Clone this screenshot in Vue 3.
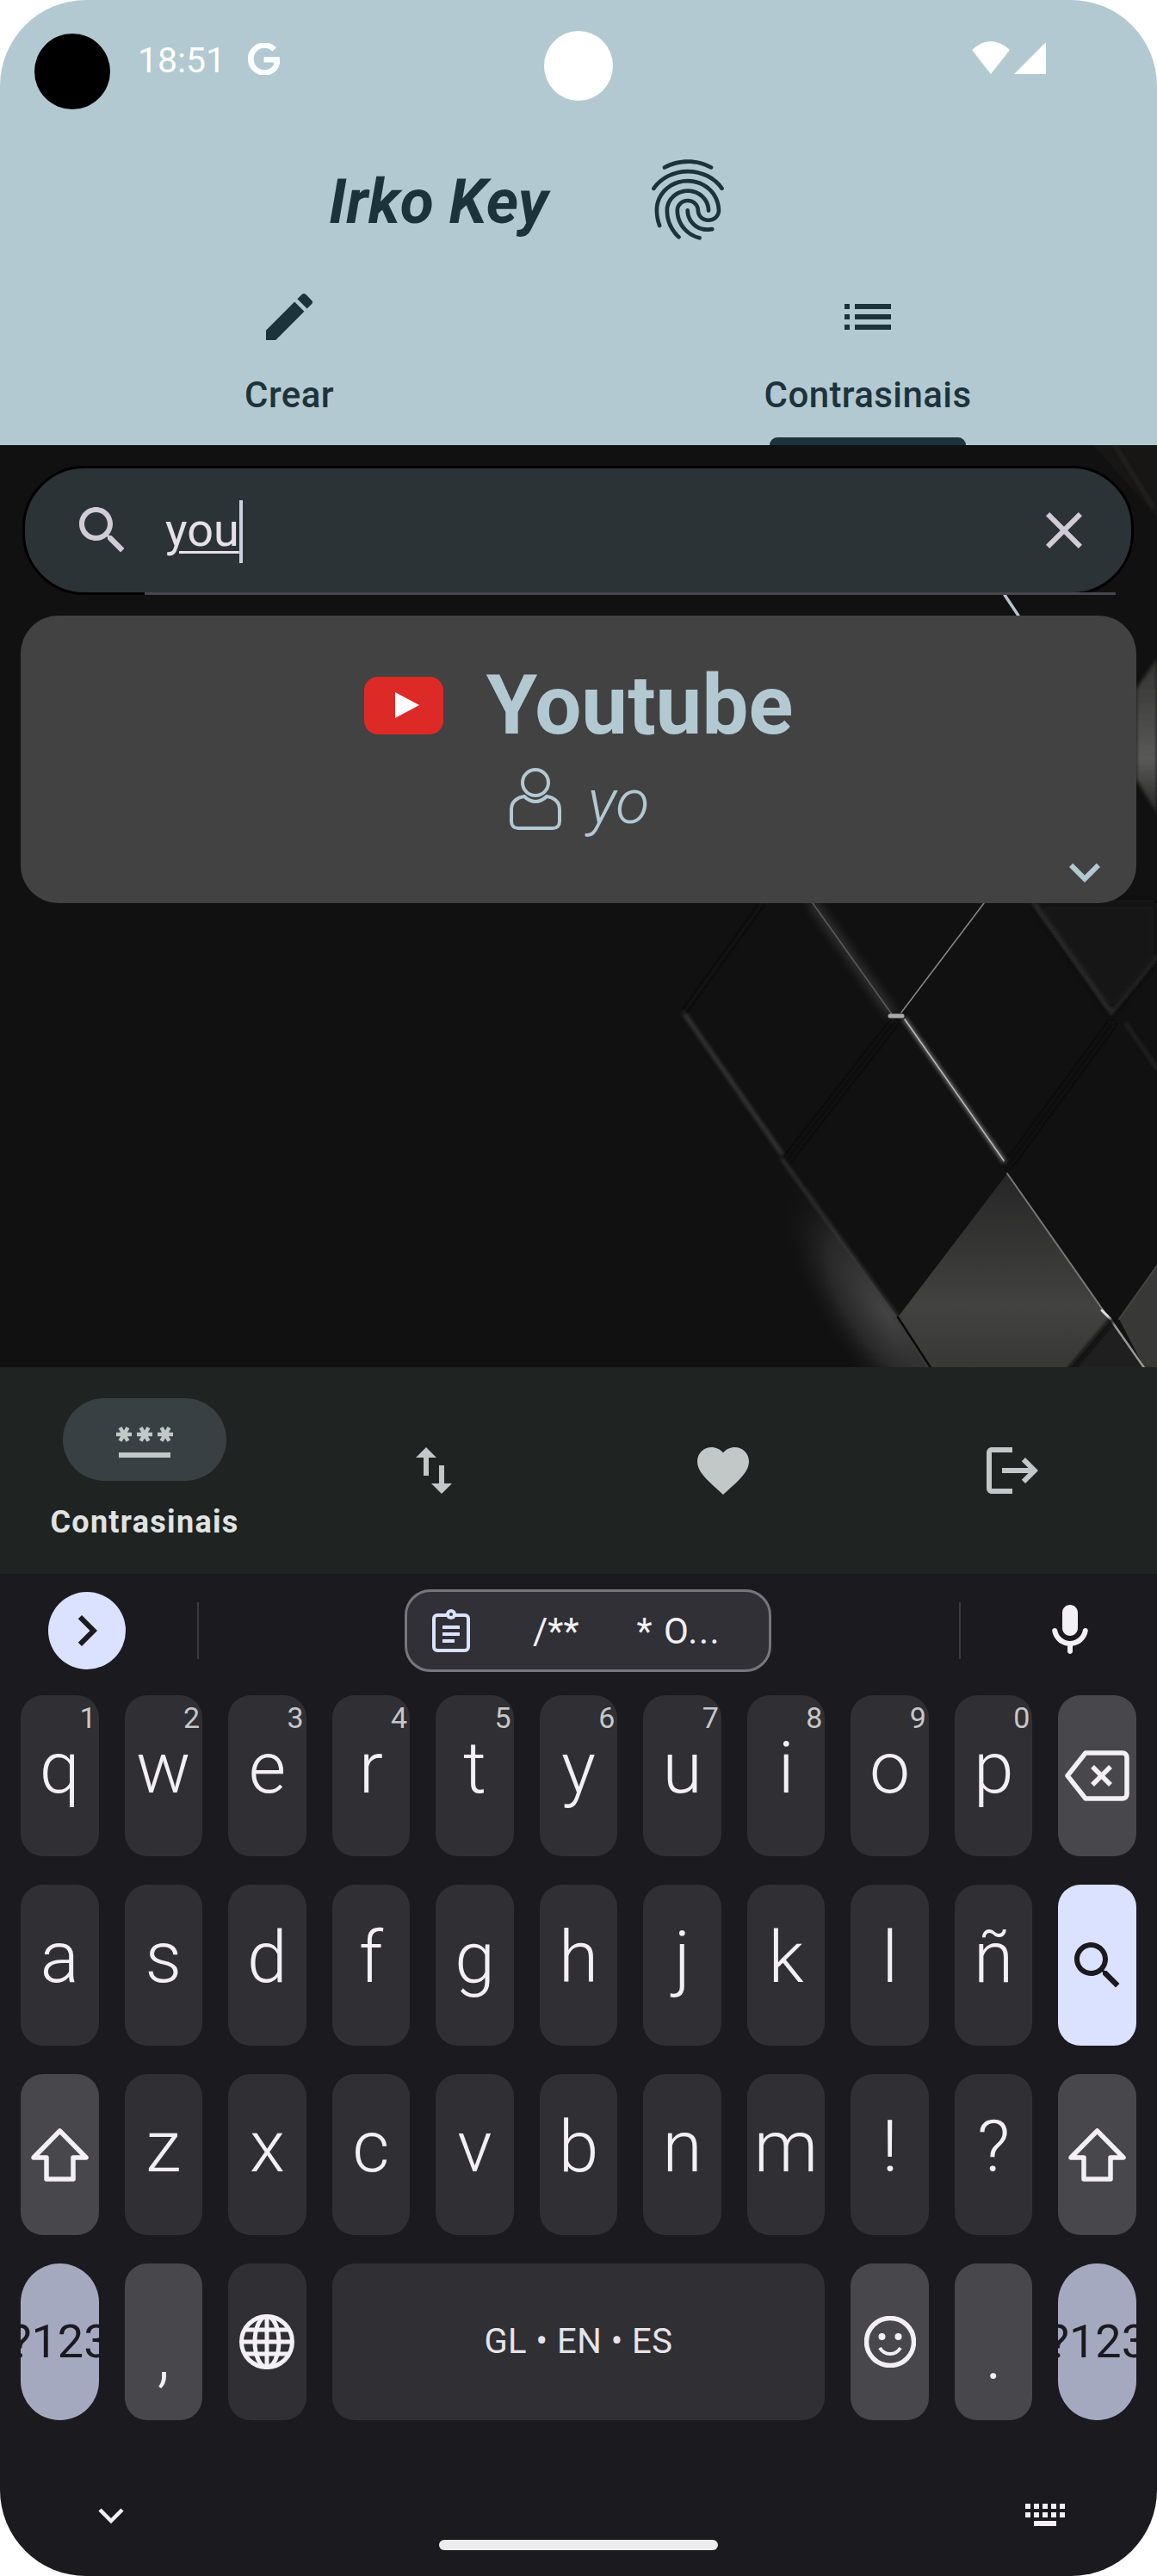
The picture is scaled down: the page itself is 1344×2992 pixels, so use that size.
<template>
  <div class="phone">
    <header class="top">
      <div class="status">
        <span class="cam"></span>
        <span class="time">18:51</span>
        <svg class="g-icon" viewBox="0 0 24 24"><path d="M12.48 10.92v3.28h7.84c-.24 1.84-.853 3.187-1.787 4.133-1.147 1.147-2.933 2.4-6.053 2.4-4.827 0-8.6-3.893-8.6-8.72s3.773-8.72 8.6-8.72c2.6 0 4.507 1.027 5.907 2.347l2.307-2.307C18.747 1.44 16.133 0 12.48 0 5.867 0 .307 5.387.307 12s5.56 12 12.173 12c3.573 0 6.267-1.173 8.373-3.36 2.16-2.16 2.84-5.213 2.84-7.667 0-.76-.053-1.467-.173-2.053H12.48z"/></svg>
        <svg class="sys-icons" viewBox="0 0 86 38"><path d="M0 10Q22-10 44 10L22 38Z"/><path d="M86 1V38H49Z"/></svg>
        <span class="dot"></span>
      </div>
      <div class="brand">
        <h1>Irko Key</h1>
        <svg class="finger" viewBox="0 0 24 24"><path d="M17.81 4.47c-.08 0-.16-.02-.23-.06C15.66 3.42 14 3 12.01 3c-1.98 0-3.86.47-5.57 1.41-.24.13-.54.04-.68-.2-.13-.24-.04-.55.2-.68C7.82 2.52 9.86 2 12.01 2c2.13 0 3.99.47 6.03 1.52.25.13.34.43.21.67-.09.18-.26.28-.44.28zM3.5 9.72c-.1 0-.2-.03-.29-.09-.23-.16-.28-.47-.12-.7.99-1.4 2.25-2.5 3.75-3.27C9.98 4.04 14 4.03 17.15 5.65c1.5.77 2.76 1.86 3.75 3.25.16.22.11.54-.12.7-.23.16-.54.11-.7-.12-.9-1.26-2.04-2.25-3.39-2.94-2.87-1.47-6.54-1.47-9.4.01-1.36.7-2.5 1.7-3.4 2.96-.08.14-.23.21-.39.21zm6.25 12.07c-.13 0-.26-.05-.35-.15-.87-.87-1.34-1.43-2.01-2.64-.69-1.23-1.05-2.73-1.05-4.34 0-2.97 2.54-5.39 5.66-5.39s5.66 2.42 5.66 5.39c0 .28-.22.5-.5.5s-.5-.22-.5-.5c0-2.42-2.09-4.39-4.66-4.39-2.57 0-4.66 1.97-4.66 4.39 0 1.44.32 2.77.93 3.85.64 1.15 1.08 1.64 1.85 2.42.19.2.19.51 0 .71-.11.1-.24.15-.37.15zm7.17-1.85c-1.19 0-2.24-.3-3.1-.89-1.49-1.01-2.38-2.65-2.38-4.39 0-.28.22-.5.5-.5s.5.22.5.5c0 1.41.72 2.74 1.94 3.56.71.48 1.54.71 2.54.71.24 0 .64-.03 1.04-.1.27-.05.53.13.58.41.05.27-.13.53-.41.58-.57.11-1.07.12-1.21.12zM14.91 22c-.04 0-.09-.01-.13-.02-1.59-.44-2.63-1.03-3.72-2.1-1.4-1.39-2.17-3.24-2.17-5.22 0-1.62 1.38-2.94 3.08-2.94 1.7 0 3.08 1.32 3.08 2.94 0 1.07.93 1.94 2.08 1.94s2.08-.87 2.08-1.94c0-3.77-3.25-6.83-7.25-6.83-2.84 0-5.44 1.58-6.61 4.03-.39.81-.59 1.76-.59 2.8 0 .78.07 2.01.67 3.61.1.26-.03.55-.29.64-.26.1-.55-.04-.64-.29-.49-1.31-.73-2.61-.73-3.96 0-1.2.23-2.29.68-3.24 1.33-2.79 4.28-4.6 7.51-4.6 4.55 0 8.25 3.51 8.25 7.83 0 1.62-1.38 2.94-3.08 2.94s-3.08-1.32-3.08-2.94c0-1.07-.93-1.94-2.08-1.94s-2.08.87-2.08 1.94c0 1.71.66 3.31 1.87 4.51.95.94 1.86 1.46 3.27 1.85.27.07.42.35.35.61-.05.23-.26.38-.47.38z"/></svg>
      </div>
      <div class="tabs">
        <div class="tab">
          <svg class="ico" viewBox="0 0 24 24"><path d="M3 17.25V21h3.75L17.81 9.94l-3.75-3.75L3 17.25zM20.71 7.04c.39-.39.39-1.02 0-1.41l-2.34-2.34c-.39-.39-1.02-.39-1.41 0l-1.83 1.83 3.75 3.75 1.83-1.83z"/></svg>
          <span>Crear</span>
        </div>
        <div class="tab">
          <svg class="ico" viewBox="0 0 24 24"><path d="M3 13h2v-2H3v2zm0 4h2v-2H3v2zm0-8h2V7H3v2zm4 4h14v-2H7v2zm0 4h14v-2H7v2zM7 7v2h14V7H7z"/></svg>
          <span>Contrasinais</span>
          <i class="indicator"></i>
        </div>
      </div>
    </header>

    <main class="content">
      <svg class="wall" viewBox="0 517 1344 1071" preserveAspectRatio="none">
        <defs>
          <filter id="b2" x="-30%" y="-30%" width="160%" height="160%"><feGaussianBlur stdDeviation="2"/></filter>
          <filter id="b6" x="-30%" y="-30%" width="160%" height="160%"><feGaussianBlur stdDeviation="6"/></filter>
          <linearGradient id="litD" x1="0" y1="0" x2="0" y2="1">
            <stop offset="0" stop-color="#262626"/><stop offset=".65" stop-color="#424241"/><stop offset="1" stop-color="#363635"/>
          </linearGradient>
          <radialGradient id="glowL" gradientUnits="userSpaceOnUse" cx="0" cy="0" r="1">
            <stop offset="0" stop-color="#444"/><stop offset=".55" stop-color="#282828"/><stop offset="1" stop-color="#111" stop-opacity="0"/>
          </radialGradient>
          <linearGradient id="edgeR" x1="0" y1="0" x2="0" y2="1">
            <stop offset="0" stop-color="#333331"/><stop offset=".65" stop-color="#595957"/><stop offset="1" stop-color="#262626"/>
          </linearGradient>
        </defs>
        <rect x="0" y="517" width="1344" height="1071" fill="#111"/>
        <path d="M1201 1049H1344V1111L1291 1176Z" fill="#181818" filter="url(#b6)"/>
        <!-- soft light falling to the left of the big tile -->
        <g transform="translate(1030 1525) rotate(54) scale(190 72)">
          <circle r="1" fill="url(#glowL)"/>
        </g>
        <path d="M908 1346L1041 1184L1170 1362L1043 1530Z" fill="#111"/>
        <path d="M1170 1363L1283 1524L1330 1600H1082L1043 1530Z" fill="url(#litD)"/>
        <path d="M1300 1532L1344 1470V1600H1335Z" fill="#383837"/>
        <path d="M1291 1534L1242 1592H1332Z" fill="#1f1f1f"/>
        <path d="M1320 800L1344 765V945L1320 905Z" fill="url(#edgeR)" filter="url(#b2)"/>
        <path d="M1270 517L1344 600V517Z" fill="#171615"/>
        <g fill="none" stroke-linecap="round">
          <path d="M912 1350L1038 1188M1172 1352L1291 1190" stroke="#090909" stroke-width="9" filter="url(#b2)"/>
          <path d="M794 1176L908 1340" stroke="#3c3c3c" stroke-width="4" filter="url(#b2)"/>
          <path d="M794 1176L885 1050" stroke="#0b0b0b" stroke-width="4" filter="url(#b2)"/>
          <path d="M908 1346L1043 1530" stroke="#3a3a3a" stroke-width="3" filter="url(#b2)"/>
          <path d="M944 1049L1036 1178" stroke="#4a4a4a" stroke-width="6" filter="url(#b6)"/>
          <path d="M944 1049L1036 1178" stroke="#5c5c5c" stroke-width="1.5"/>
          <path d="M1143 1049L1047 1176" stroke="#888" stroke-width="1.5"/>
          <path d="M1051 1184L1166 1348" stroke="#666" stroke-width="5" filter="url(#b2)"/>
          <path d="M1051 1184L1166 1348" stroke="#bbb" stroke-width="1.5"/>
          <path d="M1034 1180H1048" stroke="#aaa" stroke-width="5"/>
          <path d="M1201 1049L1291 1176" stroke="#333" stroke-width="4" filter="url(#b2)"/>
          <path d="M1344 1111L1291 1176M1308 1189L1344 1241" stroke="#2c2c2c" stroke-width="3" filter="url(#b2)"/>
          <path d="M1170 1363L1283 1524" stroke="#777" stroke-width="2"/>
          <path d="M1291 1534L1330 1590" stroke="#999" stroke-width="2.5"/>
          <path d="M1280 1522L1290 1532" stroke="#ddd" stroke-width="3"/>
          <path d="M1043 1530L1082 1590" stroke="#0a0a0a" stroke-width="2.5"/>
          <path d="M1291 1534L1242 1592" stroke="#0c0c0c" stroke-width="6" filter="url(#b2)"/>
          <path d="M1300 1532L1344 1470" stroke="#444" stroke-width="2"/>
          <path d="M1167 691L1183 715" stroke="#b8c2d0" stroke-width="3.5"/>
          <path d="M1295 517L1340 590" stroke="#2a2724" stroke-width="3" filter="url(#b2)"/>
        </g>
      </svg>

      <div class="search">
        <svg class="ico-s" viewBox="0 0 24 24"><path d="M15.5 14h-.79l-.28-.27C15.41 12.59 16 11.11 16 9.5 16 5.91 13.09 3 9.5 3S3 5.91 3 9.5 5.91 16 9.5 16c1.61 0 3.09-.59 4.23-1.57l.27.28v.79l5 4.99L20.49 19l-4.99-5zm-6 0C7.01 14 5 11.99 5 9.5S7.01 5 9.5 5 14 7.01 14 9.5 11.99 14 9.5 14z"/></svg>
        <span class="query">you</span><i class="caret"></i>
        <svg class="ico-s close" viewBox="0 0 24 24"><path d="M19 6.41L17.59 5 12 10.59 6.41 5 5 6.41 10.59 12 5 17.59 6.41 19 12 13.41 17.59 19 19 17.59 13.41 12z"/></svg>
        <i class="search-line"></i>
      </div>

      <section class="card">
        <div class="card-title">
          <svg class="yt" viewBox="0 0 92 67"><rect width="92" height="67" rx="16" fill="#de2a27"/><path d="M36 18L64 33L36 48Z" fill="#fff"/></svg>
          <span>Youtube</span>
        </div>
        <div class="card-user">
          <svg class="user" viewBox="0 0 60 72" fill="none"><circle cx="30" cy="17" r="15"/><path d="M17 33c-8 1-15 6-15 15v14c0 5 3 8 8 8h40c5 0 8-3 8-8V48c0-9-7-14-15-15-3 3-7 6-13 6s-10-3-13-6z"/></svg>
          <span>yo</span>
        </div>
        <svg class="expand" viewBox="0 0 24 24"><path d="M7.41 8.59L12 13.17l4.59-4.58L18 10l-6 6-6-6z"/></svg>
      </section>
    </main>

    <nav class="bottom-nav">
      <div class="nav-item active">
        <div class="pill">
          <svg class="ico" viewBox="0 0 24 24"><path d="M2 17h20v2H2v-2zm1.15-4.05L4 11.47l.85 1.48 1.3-.75-.85-1.48H7v-1.5H5.3l.85-1.47L4.85 7 4 8.47 3.15 7l-1.3.75.85 1.47H1v1.5h1.7l-.85 1.48 1.3.75zm6.7-.75 1.3.75.85-1.48.85 1.48 1.3-.75-.85-1.48H15v-1.5h-1.7l.85-1.47-1.3-.75L12 8.47 11.15 7l-1.3.75.85 1.47H9v1.5h1.7l-.85 1.48zM23 9.22h-1.7l.85-1.47-1.3-.75L20 8.47 19.15 7l-1.3.75.85 1.47H17v1.5h1.7l-.85 1.48 1.3.75.85-1.48.85 1.48 1.3-.75-.85-1.48H23v-1.5z"/></svg>
        </div>
        <span>Contrasinais</span>
      </div>
      <div class="nav-item">
        <svg class="ico" viewBox="0 0 24 24"><path d="M16 17.01V10h-2v7.01h-3L15 21l4-3.99h-3zM9 3L5 6.99h3V14h2V6.99h3L9 3z"/></svg>
      </div>
      <div class="nav-item">
        <svg class="ico" viewBox="0 0 24 24"><path d="M12 21.35l-1.45-1.32C5.4 15.36 2 12.28 2 8.5 2 5.42 4.42 3 7.5 3c1.74 0 3.41.81 4.5 2.09C13.09 3.81 14.76 3 16.5 3 19.58 3 22 5.42 22 8.5c0 3.78-3.4 6.86-8.55 11.54L12 21.35z"/></svg>
      </div>
      <div class="nav-item">
        <svg class="ico" viewBox="0 0 24 24"><path d="M17 7l-1.41 1.41L18.17 11H8v2h10.17l-2.58 2.58L17 17l5-5zM4 5h8V3H4c-1.1 0-2 .9-2 2v14c0 1.1.9 2 2 2h8v-2H4V5z"/></svg>
      </div>
    </nav>

    <section class="keyboard">
      <div class="toolbar">
        <div class="round-btn">
          <svg viewBox="0 0 24 24" width="72" height="72"><path d="M8.59 16.59L13.17 12 8.59 7.41 10 6l6 6-6 6z"/></svg>
        </div>
        <i class="divider first"></i>
        <div class="clip">
          <svg class="clip-ico" viewBox="0 0 44 50" fill="none">
            <rect x="2" y="7" width="40" height="41" rx="4" stroke-width="4"/>
            <circle cx="22" cy="6" r="6" fill="#dae2ff" stroke="none"/>
            <circle cx="22" cy="6" r="2" fill="#303036" stroke="none"/>
            <path d="M12 21H32M12 29H32M12 37H26" stroke-width="4"/>
          </svg>
          <span class="clip-a">/**</span>
          <span class="clip-b">* O...</span>
        </div>
        <i class="divider"></i>
        <svg class="mic" viewBox="0 0 24 24"><path d="M12 14c1.66 0 3-1.34 3-3V5c0-1.66-1.34-3-3-3S9 3.34 9 5v6c0 1.66 1.34 3 3 3zm5.91-3c-.49 0-.9.36-.98.85C16.52 14.2 14.47 16 12 16s-4.52-1.8-4.93-4.15c-.08-.49-.49-.85-.98-.85-.61 0-1.09.54-1 1.14.49 3 2.89 5.35 5.91 5.78V20c0 .55.45 1 1 1s1-.45 1-1v-2.08c3.02-.43 5.42-2.78 5.91-5.78.1-.6-.39-1.14-1-1.14z"/></svg>
      </div>

      <div class="keys">
        <div v-for="k in keys" :key="k.id" class="key" :class="k.cls">
          <template v-if="k.icon === 'back'">
            <svg width="75" height="59" viewBox="0 0 75 59" fill="none" class="line-ico"><path d="M24 3H67a5 5 0 0 1 5 5V51a5 5 0 0 1-5 5H24L3 29.5Z"/><path d="M32 19L53 40M53 19L32 40"/></svg>
          </template>
          <template v-else-if="k.icon === 'search'">
            <svg width="72" height="72" viewBox="0 0 24 24"><path d="M15.5 14h-.79l-.28-.27C15.41 12.59 16 11.11 16 9.5 16 5.91 13.09 3 9.5 3S3 5.91 3 9.5 5.91 16 9.5 16c1.61 0 3.09-.59 4.23-1.57l.27.28v.79l5 4.99L20.49 19l-4.99-5zm-6 0C7.01 14 5 11.99 5 9.5S7.01 5 9.5 5 14 7.01 14 9.5 11.99 14 9.5 14z" fill="#1a1a1f"/></svg>
          </template>
          <template v-else-if="k.icon === 'shift'">
            <svg width="69" height="63" viewBox="0 0 69 63" fill="none" class="line-ico"><path d="M34.5 4L65 35H50V60H19V35H4Z"/></svg>
          </template>
          <template v-else-if="k.icon === 'globe'">
            <svg width="64" height="64" viewBox="0 0 64 64" fill="none" class="line-ico thin"><circle cx="32" cy="32" r="29.5"/><ellipse cx="32" cy="32" rx="14" ry="29.5"/><path d="M32 3V61M3 32H61M7 18H57M7 46H57"/></svg>
          </template>
          <template v-else-if="k.icon === 'emoji'">
            <svg width="60" height="60" viewBox="0 0 60 60" fill="none" class="line-ico"><circle cx="30" cy="30" r="27.5"/><circle cx="20.5" cy="24" r="4" fill="#f2f0f5" stroke="none"/><circle cx="39.5" cy="24" r="4" fill="#f2f0f5" stroke="none"/><path d="M18 37c3 5 7 7 12 7s9-2 12-7" stroke-width="4"/></svg>
          </template>
          <template v-else>{{ k.label }}</template>
          <span v-if="k.hint" class="hint">{{ k.hint }}</span>
        </div>
      </div>

      <div class="kb-foot">
        <div class="kb-foot-row">
          <svg width="30" height="18" viewBox="0 0 30 18" fill="none"><path d="M2 2L15 15L28 2" stroke="#f2f0f5" stroke-width="4.5"/></svg>
          <svg width="47" height="27" viewBox="0 0 47 27" fill="#f2f0f5">
            <rect v-for="n in 5" :key="'a' + n" :x="(n - 1) * 10" y="0" width="6" height="6"/>
            <rect v-for="n in 5" :key="'b' + n" :x="(n - 1) * 10" y="10" width="6" height="6"/>
            <rect x="10" y="20" width="26" height="6"/>
          </svg>
        </div>
        <i class="home"></i>
      </div>
    </section>
  </div>
</template>

<script setup>
const row1 = ['q', 'w', 'e', 'r', 't', 'y', 'u', 'i', 'o', 'p']
const hints = ['1', '2', '3', '4', '5', '6', '7', '8', '9', '0']
const row2 = ['a', 's', 'd', 'f', 'g', 'h', 'j', 'k', 'l', 'ñ']
const row3 = ['z', 'x', 'c', 'v', 'b', 'n', 'm', '!', '?']

const keys = [
  ...row1.map((l, i) => ({ id: l, label: l, hint: hints[i] })),
  { id: 'back', icon: 'back', cls: 'fn' },
  ...row2.map((l) => ({ id: l, label: l })),
  { id: 'search', icon: 'search', cls: 'action' },
  { id: 'shift1', icon: 'shift', cls: 'fn' },
  ...row3.map((l) => ({ id: l, label: l })),
  { id: 'shift2', icon: 'shift', cls: 'fn' },
  { id: 'sym1', label: '?123', cls: 'sym' },
  { id: 'comma', label: ',', cls: 'fn low' },
  { id: 'globe', icon: 'globe' },
  { id: 'space', label: 'GL • EN • ES', cls: 'space' },
  { id: 'emoji', icon: 'emoji', cls: 'fn' },
  { id: 'dot', label: '.', cls: 'fn low' },
  { id: 'sym2', label: '?123', cls: 'sym' }
]
</script>

<style>
html, body { margin: 0; background: #fff; }
</style>

<style scoped>
.phone { width: 1344px; height: 2992px; border-radius: 100px; overflow: hidden; display: flex; flex-direction: column; font-family: Roboto, "Noto Sans", sans-serif; position: relative; }
.top { height: 517px; flex: none; background: #b3c9d2; color: #1d333b; }
.status { height: 166px; display: flex; align-items: flex-start; padding: 0 129px 0 40px; box-sizing: border-box; position: relative; }
.cam { width: 88px; height: 88px; margin-top: 39px; border-radius: 50%; background: #000; }
.time { margin: 47px 0 0 32px; font-size: 41px; line-height: 47px; color: #fff; }
.g-icon { width: 37px; height: 37px; margin: 50px 0 0 26px; fill: #fff; stroke: #fff; stroke-width: .9; }
.sys-icons { width: 86px; height: 38px; margin: 48px 0 0 auto; fill: #fff; }
.dot { position: absolute; left: 632px; top: 36px; width: 80px; height: 81px; border-radius: 50%; background: #fff; }
.brand { height: 166px; display: flex; align-items: flex-start; padding-left: 382px; }
.brand h1 { margin: 26px 0 0; font-size: 71.5px; line-height: 86px; font-weight: 700; font-style: italic; }
.finger { width: 112px; height: 112px; margin: 10px 0 0 106px; fill: #1d333b; }
.tabs { display: grid; grid-template-columns: 1fr 1fr; height: 185px; }
.tab { position: relative; display: flex; flex-direction: column; align-items: center; font-size: 42px; line-height: 49px; font-weight: 480; letter-spacing: .4px; }
.tab span { margin-top: 30px; }
.ico { width: 72px; height: 72px; fill: currentColor; flex: none; }
.indicator { position: absolute; left: 222px; bottom: 0; width: 228px; height: 9px; border-radius: 9px 9px 0 0; background: #1d333b; }

.content { height: 1071px; flex: none; position: relative; padding: 24px; box-sizing: border-box; overflow: hidden; }
.wall { position: absolute; left: 0; top: 0; width: 1344px; height: 1071px; }
.search { position: relative; height: 150px; width: 1291px; margin-left: 2px; box-sizing: border-box; border: 3px solid #000; border-radius: 72px; background: #2c3337; display: flex; align-items: center; padding: 0 42px 0 54px; color: #e6e1e9; }
.ico-s { width: 72px; height: 72px; fill: #d0cbd5; flex: none; }
.query { margin-left: 37px; font-size: 54px; line-height: 64px; text-decoration: underline; text-decoration-thickness: 3px; text-underline-offset: 6px; }
.caret { width: 4px; height: 73px; background: #c9d2dc; margin-top: 3px; }
.close { margin-left: auto; }
.search-line { position: absolute; left: 139px; top: 144px; width: 1128px; height: 3px; background: #49454f; }

.card { position: relative; height: 334px; margin-top: 24px; box-sizing: border-box; padding-top: 48px; border-radius: 44px; background: #424242; color: #b3c9d2; }
.card-title { display: flex; justify-content: center; align-items: center; gap: 50px; font-size: 96px; line-height: 112px; font-weight: 700; }
.yt { width: 92px; height: 67px; }
.card-user { display: flex; justify-content: center; align-items: flex-start; gap: 31px; margin-top: 15px; font-size: 72px; line-height: 84px; font-style: italic; font-weight: 340; }
.user { width: 60px; height: 72px; margin-top: 2px; margin-left: 2px; stroke: #b3c9d2; stroke-width: 4; }
.expand { position: absolute; right: 24px; bottom: 0; width: 72px; height: 72px; fill: #b3c9d2; }

.bottom-nav { height: 240px; flex: none; background: #1f2321; display: grid; grid-template-columns: repeat(4, 1fr); color: #c2c7c7; }
.nav-item { display: flex; flex-direction: column; align-items: center; justify-content: center; }
.nav-item.active { justify-content: flex-start; padding-top: 36px; }
.pill { width: 190px; height: 96px; border-radius: 48px; background: #394043; display: flex; align-items: center; justify-content: center; }
.nav-item span { margin-top: 27px; font-size: 36px; line-height: 42px; font-weight: 700; color: #e1e3e3; letter-spacing: 1.3px; }

.keyboard { flex: 1; background: #1a1a1f; display: flex; flex-direction: column; }
.toolbar { height: 132px; margin-bottom: 9px; flex: none; display: flex; align-items: center; padding-left: 56px; }
.round-btn { width: 90px; height: 90px; border-radius: 50%; background: #dae2ff; display: flex; align-items: center; justify-content: center; }
.round-btn svg { fill: #1a1a1f; }
.divider { width: 2px; height: 66px; background: #3a3a3f; margin-left: 218px; }
.divider.first { margin-left: 83px; }
.clip { margin-left: 239px; width: 426px; height: 96px; box-sizing: border-box; border: 3px solid #77767c; border-radius: 30px; background: #303036; display: flex; align-items: center; color: #f2f0f5; font-size: 42px; }
.clip-ico { width: 44px; height: 50px; margin-left: 29px; stroke: #dae2ff; flex: none; }
.clip-a { margin-left: 73px; }
.clip-b { margin-left: 67px; letter-spacing: 1.5px; }
.mic { width: 72px; height: 72px; margin-left: 91px; fill: #f2f0f5; }

.keys { display: grid; grid-template-columns: repeat(11, 1fr); grid-template-rows: 187px 187px 187px 182px; gap: 33px 30px; padding: 0 24px; flex: none; }
.key { position: relative; min-width: 0; border-radius: 26px; background: #2f2f34; color: #f2f0f5; display: flex; align-items: center; justify-content: center; font-size: 84px; line-height: 98px; font-weight: 350; padding-bottom: 18px; box-sizing: border-box; overflow: hidden; }
.key:has(svg) { padding-bottom: 0; }
.fn { background: #47474c; }
.action { background: #dae2ff; }
.sym { background: #a5a9c0; color: #1a1a1f; font-size: 54px; font-weight: 450; padding-bottom: 0; border-radius: 46px; white-space: nowrap; }
.low { padding-bottom: 0; padding-top: 30px; }
.space { grid-column: span 5; font-size: 40px; font-weight: 400; letter-spacing: .5px; padding-bottom: 0; color: #e6e4ea; }
.hint { position: absolute; top: 6px; right: 3px; font-size: 34px; font-weight: 400; line-height: 40px; color: #c7c7c9; }
.line-ico { stroke: #f2f0f5; stroke-width: 5.5; stroke-linejoin: round; }
.line-ico.thin { stroke-width: 5; }

.kb-foot { flex: 1; padding-top: 97px; display: flex; flex-direction: column; align-items: center; }
.kb-foot-row { width: 100%; box-sizing: border-box; height: 27px; padding: 0 106px 0 114px; display: flex; justify-content: space-between; align-items: center; }
.home { width: 324px; height: 12px; margin-top: 15px; border-radius: 6px; background: #ececec; }
</style>
